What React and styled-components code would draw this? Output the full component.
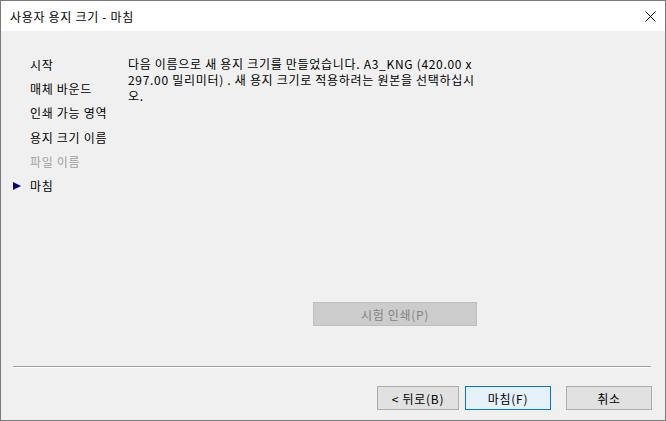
import React from "react";
import styled, { createGlobalStyle } from "styled-components";

const GlobalStyle = createGlobalStyle`
  html, body {
    margin: 0;
    padding: 0;
    background: #ffffff;
  }
  * {
    box-sizing: border-box;
  }
`;

const steps = [
  { label: "시작" },
  { label: "매체 바운드" },
  { label: "인쇄 가능 영역" },
  { label: "용지 크기 이름" },
  { label: "파일 이름", disabled: true },
  { label: "마침", current: true },
];

function App() {
  return (
    <>
      <GlobalStyle />
      <Window>
        <TitleBar>
          <Title>사용자 용지 크기 - 마침</Title>
          <CloseButton aria-label="닫기">
            <svg width="11" height="11" viewBox="0 0 11 11">
              <path d="M0.5 0.5 L10.5 10.5 M10.5 0.5 L0.5 10.5" stroke="#000" strokeWidth="1" fill="none" />
            </svg>
          </CloseButton>
        </TitleBar>
        <Body>
          <Main>
            <Nav>
              {steps.map((s) => (
                <NavItem key={s.label} $disabled={s.disabled}>
                  <Marker>{s.current && <Arrow />}</Marker>
                  {s.label}
                </NavItem>
              ))}
            </Nav>
            <Content>
              <Message>
                다음 이름으로 새 용지 크기를 만들었습니다. A3_KNG (420.00 x
                297.00 밀리미터) . 새 용지 크기로 적용하려는 원본을 선택하십시
                오.
              </Message>
              <TestButton disabled>시험 인쇄(P)</TestButton>
            </Content>
          </Main>
          <Separator />
          <Footer>
            <Button $w={82}>&lt; 뒤로(B)</Button>
            <Button $w={86} $primary>마침(F)</Button>
            <Button $w={86} $gap={15}>취소</Button>
          </Footer>
        </Body>
      </Window>
    </>
  );
}

const Window = styled.div`
  width: 666px;
  height: 421px;
  border: 1px solid #7a7a7a;
  display: flex;
  flex-direction: column;
  font-family: "Noto Sans CJK KR", "Liberation Sans", sans-serif;
  font-size: 12px;
  letter-spacing: 0.7px;
  color: #000;
  overflow: hidden;
`;

const TitleBar = styled.div`
  height: 30px;
  background: #ffffff;
  display: flex;
  align-items: center;
  padding: 0 4px 0 9px;
`;

const Title = styled.div`
  flex: 1;
  font-size: 12px;
`;

const CloseButton = styled.div`
  width: 22px;
  display: flex;
  justify-content: center;
  align-items: center;
`;

const Body = styled.div`
  flex: 1;
  background: #f0f0f0;
  display: flex;
  flex-direction: column;
`;

const Main = styled.div`
  flex: 1;
  display: flex;
  padding: 21px 0 40px 0;
`;

const Nav = styled.div`
  width: 127px;
  padding-left: 12px;
  display: flex;
  flex-direction: column;
`;

const NavItem = styled.div`
  display: flex;
  align-items: center;
  height: 24.3px;
  white-space: nowrap;
  color: ${(p) => (p.$disabled ? "#a0a0a0" : "#000")};
`;

const Marker = styled.span`
  width: 17px;
  flex-shrink: 0;
  display: flex;
  align-items: center;
`;

const Arrow = styled.span`
  width: 0;
  height: 0;
  border-top: 4.5px solid transparent;
  border-bottom: 4.5px solid transparent;
  border-left: 8px solid #000080;
`;

const Content = styled.div`
  width: 349px;
  display: flex;
  flex-direction: column;
  padding-top: 4px;
`;

const Message = styled.p`
  margin: 0;
  width: 360px;
  line-height: 16px;
`;

const TestButton = styled.button`
  margin-top: auto;
  align-self: flex-end;
  width: 164px;
  height: 24px;
  background: #cccccc;
  border: 1px solid #bfbfbf;
  color: #838383;
  font-family: inherit;
  font-size: 12px;
  letter-spacing: inherit;
  padding: 0;
`;

const Separator = styled.div`
  margin: 0 14px 0 12px;
  height: 2px;
  border-top: 1px solid #a0a0a0;
  border-bottom: 1px solid #ffffff;
`;

const Footer = styled.div`
  display: flex;
  justify-content: flex-end;
  padding: 18px 13px 10px 0;
  gap: 6px;
`;

const Button = styled.button`
  width: ${(p) => p.$w}px;
  height: 24px;
  margin-left: ${(p) => (p.$gap ? p.$gap - 6 : 0)}px;
  background: ${(p) => (p.$primary ? "#e5f1fb" : "#e1e1e1")};
  border: 1px solid ${(p) => (p.$primary ? "#0078d7" : "#adadad")};
  font-family: inherit;
  font-size: 12px;
  letter-spacing: inherit;
  color: #000;
  padding: 0;
`;

export default App;
